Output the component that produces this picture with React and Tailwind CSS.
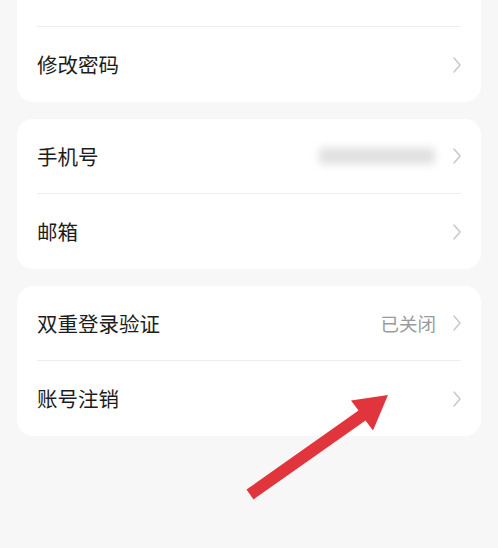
import React from 'react';

const font = { fontFamily: '"Noto Sans CJK SC", "Noto Sans", sans-serif' };

function Chevron() {
    return (
        <svg width="10" height="18" viewBox="0 0 10 18" className="shrink-0">
            <path d="M3 2 L9 9 L3 16" fill="none" stroke="#c8c8c8" strokeWidth="1.5" strokeLinecap="round" strokeLinejoin="round" />
        </svg>
    );
}

function Row({ label, value, blurred, divider, empty }) {
    return (
        <div className={`h-[75px] flex items-center ${divider ? 'border-b border-[#eeeeee]' : ''}`}>
            <span className="flex-1 text-[20.5px] text-[#1c1c1c] leading-none">{label}</span>
            {blurred && <div className="w-[116px] h-[16px] mr-[16px] rounded bg-[#e0e0e0] blur-[4px]" />}
            {value && <span className="mr-[15px] text-[18.5px] text-[#9a9a9a] leading-none">{value}</span>}
            {!empty && <Chevron />}
        </div>
    );
}

function Card({ children }) {
    return <div className="mx-[17px] px-5 bg-white rounded-2xl">{children}</div>;
}

export default function App() {
    return (
        <div className="relative w-[498px] h-[548px] overflow-hidden bg-[#f7f7f7]" style={font}>
            <div className="-mt-[48px] flex flex-col gap-[17px]">
                <Card>
                    <Row empty divider />
                    <Row label="修改密码" />
                </Card>
                <Card>
                    <Row label="手机号" blurred divider />
                    <Row label="邮箱" />
                </Card>
                <Card>
                    <Row label="双重登录验证" value="已关闭" divider />
                    <Row label="账号注销" />
                </Card>
            </div>

            {/* annotation arrow */}
            <svg className="absolute left-0 top-0 pointer-events-none" width="498" height="548" viewBox="0 0 498 548">
                <polygon
                    points="246.5,489.6 358.5,410.6 351,400.4 388,395 373,430.6 365.5,420.4 253.5,499.4"
                    fill="#e2343c"
                />
            </svg>
        </div>
    );
}
